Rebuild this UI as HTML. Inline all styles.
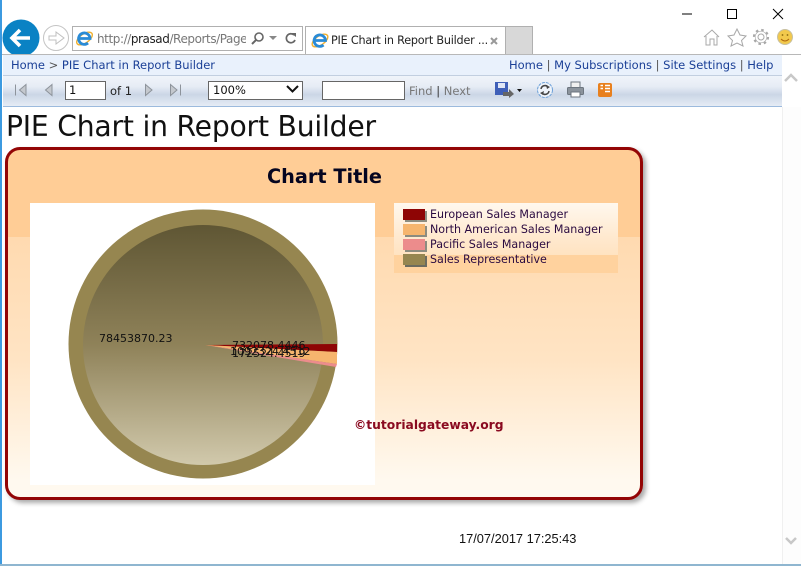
<!DOCTYPE html>
<html><head><meta charset="utf-8"><style>
html,body{margin:0;padding:0;width:801px;height:566px;overflow:hidden;background:#fff}
body{position:relative;font-family:"DejaVu Sans","Liberation Sans",sans-serif}
.a{position:absolute;white-space:nowrap}
.l{color:#1a3f96;font-size:11.5px;line-height:14px}
svg{position:absolute;overflow:visible}
</style></head><body>
<div class="a" style="left:0;top:0;width:2px;height:566px;background:#3c9ae0"></div>
<div class="a" style="left:0;top:564px;width:801px;height:2px;background:#8fb6d0"></div>

<!-- address bar -->
<div class="a" style="left:72px;top:26px;width:229px;height:23px;border:1px solid #b0b0b0"></div>
<div class="a" style="left:97px;top:31px;width:149px;overflow:hidden;font:12px/16px 'DejaVu Sans',sans-serif;color:#777;letter-spacing:-.42px">http://<span style="color:#222">prasad</span>/Reports/Pages/Report.aspx</div>
<!-- tab -->
<div class="a" style="left:305px;top:26px;width:199px;height:27px;border:1px solid #b0b0b0;border-bottom:0;background:#fff"></div>
<div class="a" style="left:331px;top:33px;font-size:11.2px;line-height:15px;color:#222;letter-spacing:-.2px">PIE Chart in Report Builder ...</div>
<div class="a" style="left:505px;top:26px;width:26px;height:27px;border:1px solid #b0b0b0;border-bottom:0;background:#d8d8d8"></div>

<!-- window controls and icons -->
<svg style="left:0;top:0" width="801" height="566">
<path d="M682 14H692" stroke="#000" stroke-width="1"/>
<rect x="727.5" y="9.5" width="9" height="9" fill="none" stroke="#000"/>
<path d="M773 9L783 19M783 9L773 19" stroke="#000" fill="none"/>
<!-- tab close -->
<path d="M491 38L497 44M497 38L491 44" stroke="#999" stroke-width="2"/>
<!-- back -->
<circle cx="21" cy="38" r="18.500" fill="#0a82c4"/>
<path d="M12 38H30M20 30L12 38L20 46" stroke="#fff" stroke-width="3.600" fill="none"/>
<circle cx="56" cy="38" r="12.500" fill="#fff" stroke="#c4c4c4"/>
<path d="M49 36H56V32L64 38L56 44V40H49Z" fill="none" stroke="#c0c0c0"/>
<!-- IE logos -->
<g transform="translate(84.500,38.500)">
<ellipse rx="9" ry="4.500" transform="rotate(-35)" fill="none" stroke="#f0b030" stroke-width="1.400"/>
<path d="M-4.500 0H5.500A5.700 5.700 0 1 0 3.500 4.500" fill="none" stroke="#2a8bd6" stroke-width="2.800"/>
</g>
<g transform="translate(320,40.500)">
<ellipse rx="9" ry="4.500" transform="rotate(-35)" fill="none" stroke="#f0b030" stroke-width="1.400"/>
<path d="M-4.500 0H5.500A5.700 5.700 0 1 0 3.500 4.500" fill="none" stroke="#2a8bd6" stroke-width="2.800"/>
</g>
<!-- search/refresh -->
<circle cx="259" cy="37" r="4" fill="none" stroke="#666" stroke-width="1.600"/><path d="M256 40L252 44" stroke="#666" stroke-width="2"/>
<path d="M269 36H277L273 40Z" fill="#888"/>
<path d="M294 35A4.500 4.500 0 1 0 295 40" stroke="#666" stroke-width="1.700" fill="none"/><path d="M291 33H296V37Z" fill="#666"/>
<!-- home star gear smile -->
<path d="M704 37L712 30L719 37M706 36V45H710V39H714V45H717V36" fill="none" stroke="#a8a8a8"/>
<path d="M737 29L740 35L746 36L741.500 40.500L743 46L737 43L731 46L732.500 40.500L728 36L734 35Z" fill="none" stroke="#a8a8a8"/>
<circle cx="761" cy="37" r="7" fill="none" stroke="#a8a8a8" stroke-width="2.200" stroke-dasharray="2.500 3"/><circle cx="761" cy="37" r="5.800" fill="#fff" stroke="#a8a8a8" stroke-width=".6"/><circle cx="761" cy="37" r="3" fill="none" stroke="#a8a8a8"/>
<circle cx="785" cy="37" r="7.500" fill="#f2c94c" stroke="#c8c0a0"/><circle cx="782.500" cy="35" r=".9" fill="#8a6a10"/><circle cx="787.500" cy="35" r=".9" fill="#8a6a10"/><path d="M781 39Q785 43 789 39" stroke="#b06a10" fill="none"/>
</svg>

<!-- frame -->
<div class="a" style="left:2px;top:54px;width:799px;height:1px;background:#b8b8b8"></div>
<!-- breadcrumb -->
<div class="a" style="left:3px;top:55px;width:779px;height:20px;background:#e9f1fc;border-bottom:1px solid #c2cfe0"></div>
<div class="a l" style="left:11px;top:58px">Home <span style="color:#555">&gt;</span> PIE Chart in Report Builder</div>
<div class="a l" style="left:509px;top:58px">Home <span style="color:#555">|</span> My Subscriptions <span style="color:#555">|</span> Site Settings <span style="color:#555">|</span> Help</div>
<!-- toolbar -->
<div class="a" style="left:3px;top:76px;width:779px;height:30px;background:linear-gradient(#f0f4fa 0,#e6ecf5 35%,#cbd6e6 62%,#e6ecf5 100%);border-bottom:1px solid #9cbadd"></div>
<div class="a" style="left:65px;top:81px;width:39px;height:17px;border:1px solid #666;background:#fff;font-size:11.500px;line-height:17px;text-indent:3px;color:#111">1</div>
<div class="a" style="left:110px;top:84px;font-size:11.500px;line-height:14px;color:#222">of 1</div>
<div class="a" style="left:208px;top:81px;width:93px;height:17px;border:1px solid #666;background:#fff;font-size:11.500px;line-height:17px;text-indent:4px;color:#111">100%</div>
<div class="a" style="left:322px;top:81px;width:81px;height:17px;border:1px solid #666;background:#fff"></div>
<div class="a" style="left:409px;top:84px;font-size:11.500px;line-height:14px;color:#777">Find <span style="color:#333">|</span> Next</div>
<svg style="left:0;top:0" width="801" height="566">
<g fill="#c4c8ce" stroke="#8d939b">
<path d="M15.500 84.500V95.500M26 84.500L19.500 90L26 95.500Z"/>
<path d="M52 84.500L45.500 90L52 95.500Z"/>
<path d="M145.500 84.500L152 90L145.500 95.500Z"/>
<path d="M170.500 84.500L177 90L170.500 95.500ZM180.500 84.500V95.500"/>
</g>
<path d="M287 86L292.500 91.500L298 86" fill="none" stroke="#111" stroke-width="2"/>
<!-- save -->
<rect x="495" y="82" width="13" height="13" fill="#3f5fb8"/><rect x="498" y="83" width="7" height="5" fill="#dfe6f6"/>
<path d="M503 92H509V89L514 94L509 98V96H503Z" fill="#666"/>
<path d="M517 89H522L519.500 92Z" fill="#111"/>
<!-- refresh -->
<circle cx="545" cy="90" r="7.500" fill="#eef3fa" stroke="#6ca0d8" stroke-dasharray="3 1"/>
<path d="M541 89A4 4 0 0 1 548 87M549 91A4 4 0 0 1 542 93" stroke="#444" stroke-width="1.500" fill="none"/>
<path d="M546 85L550 87L547 89ZM544 91L540 93L543 95Z" fill="#444"/>
<!-- print -->
<rect x="571" y="82" width="9" height="6" fill="#f0f0f0" stroke="#6d7680"/>
<rect x="567.500" y="87.500" width="16" height="7" rx="1" fill="#8b939c" stroke="#6d7680"/>
<rect x="571" y="92" width="9" height="5" fill="#fff" stroke="#6d7680"/>
<!-- export orange -->
<rect x="598" y="83" width="14" height="14" rx="2" fill="#e8801e"/>
<path d="M605 85.500H610M605 88.500H610M605 91.500H610M600.500 85.500H603M600.500 88.500H603" stroke="#fff" stroke-width="1.400"/>
</svg>

<!-- scrollbar -->
<div class="a" style="left:782px;top:107px;width:19px;height:457px;background:#fdfdfd"></div>
<div class="a" style="left:782px;top:107px;width:1px;height:457px;background:#f0f0f0"></div>
<svg style="left:0;top:0" width="801" height="566"><path d="M785 81L791 75L797 81" fill="none" stroke="#c8c8c8" stroke-width="2.500"/><path d="M786 538L791 543L796 538" fill="none" stroke="#c8c8c8" stroke-width="2.500"/></svg>

<!-- title -->
<div class="a" style="left:6px;top:110px;font:28.200px/34px 'DejaVu Sans',sans-serif;color:#111;letter-spacing:-.2px">PIE Chart in Report Builder</div>

<!-- chart panel -->
<div class="a" style="left:5px;top:147px;width:632px;height:347px;border:3px solid #930505;border-radius:15px;box-shadow:3px 3px 5px #aaa;background:linear-gradient(#ffcd96 0,#ffcd96 87px,#ffdab0 87px,#ffe4c4 210px,#fff9ef 330px)"></div>
<div class="a" style="left:267px;top:165px;font:bold 19.300px/24px 'DejaVu Sans',sans-serif;color:#050520">Chart Title</div>
<div class="a" style="left:30px;top:203px;width:345px;height:282px;background:#fff"></div>

<!-- pie -->
<svg style="left:0;top:0" width="801" height="566">
<defs><linearGradient id="p" x1="0" y1="0" x2="0" y2="1"><stop offset="0" stop-color="#5f5634"/><stop offset=".5" stop-color="#8f8259"/><stop offset="1" stop-color="#d1c9ac"/></linearGradient></defs>
<circle cx="203" cy="344" r="134.500" fill="#968650"/>
<circle cx="203" cy="345" r="120" fill="url(#p)"/>
<path d="M205 345L337 344V352Z" fill="#8e0505"/>
<path d="M205 345L337 352V364Z" fill="#f6b56e"/>
<path d="M205 345L337 364L336 367Z" fill="#ec8c8c"/>
</svg>
<div class="a" style="left:99px;top:332px;font:11px/14px 'DejaVu Sans',sans-serif;color:#111">78453870.23</div>
<div class="a" style="left:232px;top:339px;font:11px/14px 'DejaVu Sans',sans-serif;color:#111">732078.4446</div>
<div class="a" style="left:230px;top:345px;font:11px/14px 'DejaVu Sans',sans-serif;color:#111">1092324.4512</div>
<div class="a" style="left:232px;top:347px;font:11px/14px 'DejaVu Sans',sans-serif;color:#111">172524.4519</div>

<!-- legend -->
<div class="a" style="left:394px;top:203px;width:224px;height:70px;background:linear-gradient(#fff8ee 0,#ffe9cf 34px,#ffe3c1 52px,#ffd29e 52px,#ffd29e 70px)"></div>
<div class="a" style="left:405px;top:211px;width:22px;height:11px;background:#8c8c80"></div><div class="a" style="left:403px;top:209px;width:22px;height:11px;background:#8e0505"></div>
<div class="a" style="left:405px;top:226px;width:22px;height:11px;background:#8c8c80"></div><div class="a" style="left:403px;top:224px;width:22px;height:11px;background:#f6b56e"></div>
<div class="a" style="left:405px;top:241px;width:22px;height:11px;background:#8c8c80"></div><div class="a" style="left:403px;top:239px;width:22px;height:11px;background:#ec8c8c"></div>
<div class="a" style="left:405px;top:256px;width:22px;height:11px;background:#6c6c60"></div><div class="a" style="left:403px;top:254px;width:22px;height:11px;background:#968650"></div>
<div class="a" style="left:430px;top:207px;font:11.100px/15px 'DejaVu Sans',sans-serif;color:#2a0a40">European Sales Manager</div>
<div class="a" style="left:430px;top:222px;font:11.100px/15px 'DejaVu Sans',sans-serif;color:#2a0a40">North American Sales Manager</div>
<div class="a" style="left:430px;top:237px;font:11.100px/15px 'DejaVu Sans',sans-serif;color:#2a0a40">Pacific Sales Manager</div>
<div class="a" style="left:430px;top:252px;font:11.100px/15px 'DejaVu Sans',sans-serif;color:#2a0a40">Sales Representative</div>

<!-- watermark -->
<div class="a" style="left:354px;top:417px;font:bold 12.300px/17px 'DejaVu Sans',sans-serif;color:#8a0a20">©tutorialgateway.org</div>
<!-- timestamp -->
<div class="a" style="left:459px;top:531px;font:12.800px/15px 'Liberation Sans',sans-serif;color:#111">17/07/2017 17:25:43</div>
</body></html>
